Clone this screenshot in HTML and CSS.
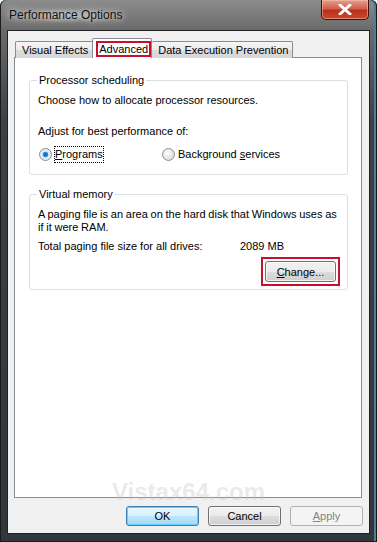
FILE: index.html
```html
<!DOCTYPE html>
<html lang="en">
<head>
    <meta charset="UTF-8">
    <meta name="viewport" content="width=device-width, initial-scale=1.0">
    <title>Performance Options</title>
    <link rel="stylesheet" href="styles.css">
</head>
<body>

<div class="window">
    <!-- title bar -->
    <div class="titlebar">
        <span class="title">Performance Options</span>
        <span class="close">
            <svg width="14" height="11" viewBox="0 0 14 11">
                <path d="M2 1 L12 10 M12 1 L2 10" stroke="#fff" stroke-width="3" stroke-linecap="round"/>
            </svg>
        </span>
    </div>

    <div class="client">
        <div class="tabs">
            <span class="tab">Visual Effects</span>
            <span class="tab active"><span class="mark">Advanced</span></span>
            <span class="tab">Data Execution Prevention</span>
        </div>

        <div class="panel">
            <fieldset class="group cpu">
                <legend>Processor scheduling</legend>
                <p class="line">Choose how to allocate processor resources.</p>
                <p class="line adjust">Adjust for best performance of:</p>
                <div class="radios">
                    <label class="radio checked"><span class="dot"></span><span class="focus"><u>P</u>rograms</span></label>
                    <label class="radio"><span class="dot"></span><span>Background <u>s</u>ervices</span></label>
                </div>
            </fieldset>

            <fieldset class="group vm">
                <legend>Virtual memory</legend>
                <p class="line wrap">A paging file is an area on the hard disk that Windows uses as if it were RAM.</p>
                <div class="total">
                    <span class="total-label">Total paging file size for all drives:</span>
                    <span>2089 MB</span>
                </div>
                <div class="change-row">
                    <span class="mark-box"><button class="btn change"><u>C</u>hange...</button></span>
                </div>
            </fieldset>
        </div>

        <div class="footer">
            <button class="btn default">OK</button>
            <button class="btn">Cancel</button>
            <button class="btn disabled"><u>A</u>pply</button>
        </div>
    </div>

    <div class="watermark">Vistax64.com</div>
</div>

</body>
</html>
```

FILE: styles.css
```css
body {
    margin: 0;
    font-family: "Liberation Sans", Arial, sans-serif;
    font-size: 11px;
    color: #000;
}
.window {
    position: relative;
    width: 377px;
    height: 542px;
    box-sizing: border-box;
    padding: 0 7px 8px 7px;
    display: flex;
    flex-direction: column;
    background: linear-gradient(to bottom, #8c8c8c 0, #6a6a6a 30px, #3b4145 120px, #30363a 100%);
    border-radius: 6px 6px 0 0;
    box-shadow: inset 1px 0 #1a1a1a, inset -1px 0 #1a1a1a, inset 0 -1px #1a1a1a, inset -3px 0 #4f7f96;
}
.titlebar {
    height: 30px;
    display: flex;
    align-items: flex-start;
}
.title {
    margin: 8px 0 0 2px;
    padding: 0 6px 0 0;
    font-size: 12px;
    line-height: 15px;
    color: #111;
    text-shadow: 0 0 6px #d8d8d8, 0 0 10px #cfcfcf;
    background: radial-gradient(ellipse at center, rgba(220, 220, 220, 0.55), rgba(220, 220, 220, 0) 70%);
}
.close {
    margin-left: auto;
    margin-right: 1px;
    width: 48px;
    height: 20px;
    box-sizing: border-box;
    display: flex;
    align-items: center;
    justify-content: center;
    border: 1px solid #3a1410;
    border-top: none;
    border-radius: 0 0 5px 5px;
    background: linear-gradient(to bottom, #e4a08f 0, #d0604a 45%, #b8301c 55%, #c94a30 100%);
    box-shadow: inset 0 0 0 1px rgba(255, 200, 190, 0.5);
}
.client {
    flex: 1;
    display: flex;
    flex-direction: column;
    background-color: #f0f0f0;
    border: 1px solid #1e2326;
    padding: 7px 7px 7px 6px;
}
.tabs {
    display: flex;
    align-items: flex-end;
    height: 20px;
    margin-bottom: -1px;
    position: relative;
    z-index: 1;
}
.tab {
    height: 17px;
    box-sizing: border-box;
    padding: 1px 4px 0 6px;
    line-height: 15px;
    border: 1px solid #898c95;
    border-bottom: none;
    border-left: none;
    background: linear-gradient(to bottom, #f6f6f6 0, #ebebeb 50%, #dcdcdc 51%, #d6d6d6 100%);
    border-radius: 2px 2px 0 0;
}
.tab:first-child {
    border-left: 1px solid #898c95;
    margin-left: 1px;
}
.tab.active {
    height: 20px;
    padding: 3px 2px 0 5px;
    background: #fff;
    border-left: 1px solid #898c95;
    margin-left: -1px;
}
.mark {
    outline: 2px solid #c8102e;
    outline-offset: 0;
    padding: 0 1px;
}
.panel {
    flex: 1;
    background-color: #fff;
    border: 1px solid #898c95;
    padding: 15px 13px 0 14px;
}
.group {
    margin: 0;
    padding: 5px 8px 12px 8px;
    border: 1px solid #d5dfe5;
    border-radius: 3px;
}
.group legend {
    padding: 0 2px;
    margin-left: -1px;
    line-height: 15px;
}
.group.vm {
    margin-top: 12px;
    padding: 6px 4px 3px 8px;
}
.line {
    margin: 0;
    line-height: 15px;
}
.adjust {
    margin-top: 16px;
}
.wrap {
    line-height: 13px;
    word-spacing: -0.3px;
}
.radios {
    display: flex;
    margin-top: 8px;
    line-height: 15px;
}
.radio {
    display: flex;
    align-items: center;
    gap: 3px;
}
.radio:first-child {
    width: 123px;
    margin-left: 1px;
}
.dot {
    width: 11px;
    height: 11px;
    border: 1px solid #8e8f8f;
    border-radius: 50%;
    background: radial-gradient(circle at 40% 40%, #ffffff, #d8d8d8 80%);
}
.checked .dot {
    background: radial-gradient(circle, #1a5fa0 0, #2f8ad8 30%, #d8e8f4 40%, #f4f4f4 100%);
}
.focus {
    outline: 1px dotted #000;
    outline-offset: 0;
}
.total {
    display: flex;
    margin-top: 5px;
    line-height: 15px;
}
.total-label {
    width: 202px;
}
.change-row {
    display: flex;
    justify-content: flex-end;
    margin-top: 3px;
    margin-right: 3px;
}
.mark-box {
    display: flex;
    padding: 2px;
    border: 2px solid #c8102e;
}
.btn {
    font-family: inherit;
    font-size: 11px;
    color: #000;
    width: 73px;
    height: 21px;
    padding: 0;
    border: 1px solid #707070;
    border-radius: 3px;
    background: linear-gradient(to bottom, #f2f2f2 0, #ebebeb 50%, #dddddd 51%, #cfcfcf 100%);
    box-shadow: inset 0 0 0 1px rgba(255, 255, 255, 0.7);
}
.change {
    width: 71px;
}
.footer {
    display: flex;
    justify-content: flex-end;
    gap: 9px;
    margin-top: 8px;
    margin-right: -1px;
}
.footer .btn {
    height: 20px;
}
.btn.default {
    border-color: #3c7fb1;
    background: linear-gradient(to bottom, #eaf6fd 0, #d9f0fc 50%, #bee6fd 51%, #a7d9f5 100%);
    box-shadow: inset 0 0 0 1px #5fd0ff;
}
.btn.disabled {
    color: #838383;
    border-color: #adb2b5;
    background: #f4f4f4;
    box-shadow: none;
}
.watermark {
    position: absolute;
    left: 0;
    right: 0;
    top: 478px;
    text-align: center;
    font-family: "Liberation Sans", Arial, sans-serif;
    font-weight: bold;
    font-size: 24px;
    color: rgba(200, 200, 200, 0.4);
    pointer-events: none;
}
```
